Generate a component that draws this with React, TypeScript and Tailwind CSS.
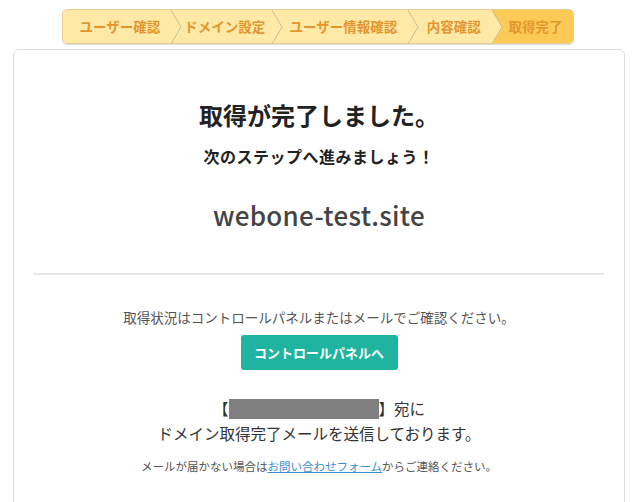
const steps = [
  { label: "ユーザー確認", w: "w-[109px]" },
  { label: "ドメイン設定", w: "w-[101px]" },
  { label: "ユーザー情報確認", w: "w-[137px]" },
  { label: "内容確認", w: "w-[84px]" },
  { label: "取得完了", w: "w-[80px]" },
];

function Chevron({ fill }: { fill: string }) {
  return (
    <svg
      className="absolute -right-[10px] top-0 z-10"
      width="11"
      height="34"
      viewBox="0 0 11 34"
    >
      <polygon points="0,0 10,17 0,34" fill={fill} />
      <polyline points="0,0 10,17 0,34" fill="none" stroke="#c9bd9c" strokeWidth="1" />
    </svg>
  );
}

function StepBar() {
  const active = steps.length - 1;
  return (
    <div className="ml-[62px] mt-[9px] flex h-[35px] w-[512px] overflow-visible rounded-[5px] border border-[#e3cf94] shadow-[0_1px_1px_rgba(0,0,0,0.15)]">
      {steps.map((s, i) => {
        const isActive = i === active;
        return (
          <div
            key={s.label}
            className={`relative flex items-center justify-center pl-[5px] text-[13.5px] font-bold text-[#e4962e] ${s.w} ${
              isActive ? "rounded-r-[4px] bg-[#fcca57]" : "bg-[#fee9a6]"
            } ${i === 0 ? "rounded-l-[4px]" : ""}`}
          >
            {s.label}
            {i < steps.length - 1 && <Chevron fill="#fee9a6" />}
          </div>
        );
      })}
    </div>
  );
}

export default function App() {
  return (
    <div
      className="h-[502px] w-[640px] overflow-hidden bg-white"
      style={{ fontFamily: '"Noto Sans CJK JP", "Noto Sans", sans-serif' }}
    >
      <StepBar />

      <div className="ml-[13px] mt-[5px] h-[480px] w-[612px] rounded-[6px] border border-[#dcdcdc] pt-[49px] text-center">
        <h1 className="text-[24px] font-bold leading-[32px] text-[#222]">取得が完了しました。</h1>
        <p className="mt-[13px] text-[16px] font-bold leading-[24px] tracking-[0.5px] text-[#222]">
          次のステップへ進みましょう！
        </p>
        <p className="mt-[29px] text-[26px] font-medium leading-[36px] tracking-[0.3px] text-[#444]">
          webone-test.site
        </p>

        <div className="ml-[19px] mr-[20px] mt-[40px] h-[2px] bg-[#e8e8e8]" />

        <p className="mt-[32px] text-[13.5px] leading-[20px] text-[#555]">
          取得状況はコントロールパネルまたはメールでご確認ください。
        </p>
        <button className="mt-[8px] h-[35px] w-[157px] rounded-[3px] bg-[#1eb4a0] text-[13px] font-bold text-white">
          コントロールパネルへ
        </button>

        <div className="mt-[26px] text-[15.5px] leading-[25px] text-[#333]">
          <p className="flex items-center justify-center">
            【<span className="inline-block h-[20px] w-[150px] bg-[#808080]" />】宛に
          </p>
          <p>ドメイン取得完了メールを送信しております。</p>
        </div>

        <p className="mt-[11px] text-[11.5px] leading-[18px] text-[#555]">
          メールが届かない場合は
          <a href="#" className="text-[#3a8fcc] underline">
            お問い合わせフォーム
          </a>
          からご連絡ください。
        </p>
      </div>
    </div>
  );
}
